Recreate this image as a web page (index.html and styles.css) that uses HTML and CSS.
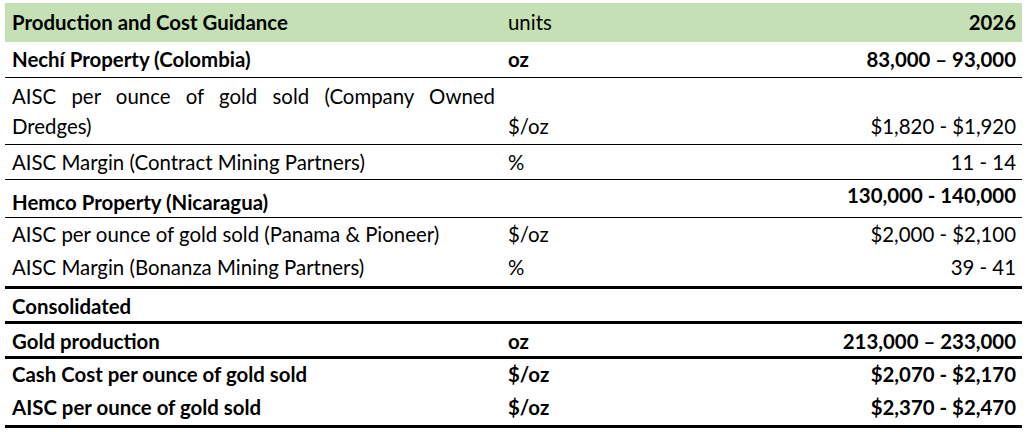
FILE: index.html
```html
<!DOCTYPE html>
<html>
<head>
<meta charset="utf-8">
<link rel="stylesheet" href="styles.css">
</head>
<body>
<div class="table">
  <div class="row head">
    <div class="c1 b">Production and Cost Guidance</div>
    <div class="c2">units</div>
    <div class="c3 b">2026</div>
  </div>
  <div class="row nechi thin">
    <div class="c1 b">Nechí Property (Colombia)</div>
    <div class="c2 b">oz</div>
    <div class="c3 b">83,000 – 93,000</div>
  </div>
  <div class="row company thin">
    <div class="c1 just">AISC per ounce of gold sold (Company Owned Dredges)</div>
    <div class="c2">$/oz</div>
    <div class="c3">$1,820 - $1,920</div>
  </div>
  <div class="row contract thin">
    <div class="c1">AISC Margin (Contract Mining Partners)</div>
    <div class="c2">%</div>
    <div class="c3">11 - 14</div>
  </div>
  <div class="row hemco thin">
    <div class="c1 b">Hemco Property (Nicaragua)</div>
    <div class="c2"></div>
    <div class="c3 b raised">130,000 - 140,000</div>
  </div>
  <div class="row panama">
    <div class="c1">AISC per ounce of gold sold (Panama &amp; Pioneer)</div>
    <div class="c2">$/oz</div>
    <div class="c3">$2,000 - $2,100</div>
  </div>
  <div class="row bonanza thick">
    <div class="c1">AISC Margin (Bonanza Mining Partners)</div>
    <div class="c2">%</div>
    <div class="c3">39 - 41</div>
  </div>
  <div class="row consol thick">
    <div class="c1 b">Consolidated</div>
    <div class="c2"></div>
    <div class="c3"></div>
  </div>
  <div class="row gold thick">
    <div class="c1 b">Gold production</div>
    <div class="c2 b">oz</div>
    <div class="c3 b">213,000 – 233,000</div>
  </div>
  <div class="row cash">
    <div class="c1 b">Cash Cost per ounce of gold sold</div>
    <div class="c2 b">$/oz</div>
    <div class="c3 b">$2,070 - $2,170</div>
  </div>
  <div class="row aisc thick">
    <div class="c1 b">AISC per ounce of gold sold</div>
    <div class="c2 b">$/oz</div>
    <div class="c3 b">$2,370 - $2,470</div>
  </div>
</div>
</body>
</html>
```

FILE: styles.css
```css
html, body {
  margin: 0;
  padding: 0;
  background: #ffffff;
}
body {
  font-family: Lato, "Liberation Sans", sans-serif;
  font-size: 20.4px;
  line-height: 30px;
  color: #000000;
}
.table {
  width: 1017px;
  margin: 3px 0 0 5px;
  display: flex;
  flex-direction: column;
}
.row {
  display: grid;
  grid-template-columns: 497px 150px 370px;
  align-items: end;
}
.row > div {
  white-space: nowrap;
}
.c1 { padding-left: 7px; padding-right: 7px; }
.c2 { padding-left: 6px; }
.c3 { padding-right: 6px; text-align: right; }
.b { font-weight: 700; }
.just {
  white-space: normal !important;
  text-align: justify;
  text-align-last: left;
}
.thin { border-bottom: 1px solid #000000; }
.thick { border-bottom: 3px solid #000000; }

.head { height: 39px; background: #c5e0b4; }
.head > div { padding-bottom: 5px; }
.nechi { height: 35px; }
.nechi > div { padding-bottom: 3px; }
.company { height: 66px; }
.company > div { padding-bottom: 3px; }
.contract { height: 34px; }
.contract > div { padding-bottom: 2px; }
.hemco { height: 37px; }
.hemco > div { padding-bottom: 0; }
.hemco > .raised { padding-bottom: 7px; }
.panama { height: 34px; }
.panama > div { padding-bottom: 3px; }
.bonanza { height: 34px; }
.bonanza > div { padding-bottom: 4px; }
.consol { height: 32px; }
.consol > div { padding-bottom: 0; }
.gold { height: 32px; }
.gold > div { padding-bottom: 0; }
.cash { height: 33px; }
.cash > div { padding-bottom: 3px; }
.aisc { height: 33px; }
.aisc > div { padding-bottom: 3px; }
```
